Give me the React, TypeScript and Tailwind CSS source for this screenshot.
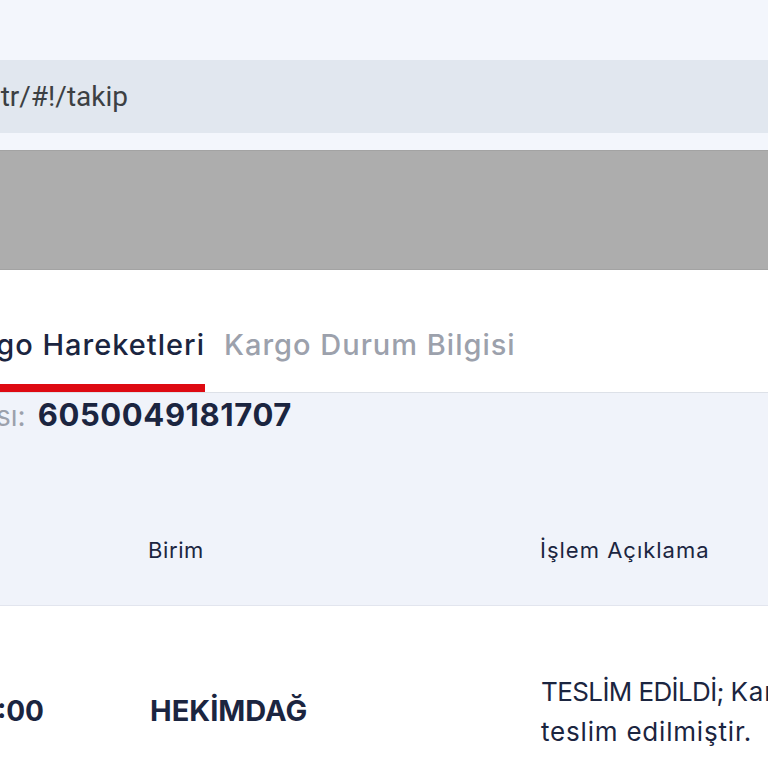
export default function App() {
  return (
    <div className="relative flex h-[768px] w-[768px] flex-col overflow-hidden bg-white font-['Inter','Noto_Sans',sans-serif] text-[#1b2540]">
      {/* browser chrome */}
      <div className="h-[60px] shrink-0 bg-[#f3f6fc]" />
      <div className="flex h-[73px] shrink-0 items-center bg-[#e1e7ef]">
        <div className="flex w-[128px] shrink-0 justify-end">
          <span className="whitespace-nowrap font-['Roboto',sans-serif] text-[28px] text-[#3c4043]">
            kargotakip.com.tr/#!/takip
          </span>
        </div>
      </div>
      <div className="h-[17px] shrink-0 bg-[#f3f6fc]" />
      <div className="h-[120px] shrink-0 border-y border-[#a3a3a3] bg-[#adadad]" />

      {/* tabs */}
      <div className="flex h-[123px] shrink-0 items-end border-b border-[#dde1e8] bg-white">
        <div className="flex w-[205px] shrink-0 justify-end border-b-[8px] border-[#de0a12] pb-[18px]">
          <span className="whitespace-nowrap text-[29px] font-medium tracking-[1px]">Kargo Hareketleri</span>
        </div>
        <div className="ml-[19px] pb-[26px]">
          <span className="whitespace-nowrap text-[29px] font-medium tracking-[1px] text-[#9ca1ac]">
            Kargo Durum Bilgisi
          </span>
        </div>
      </div>

      {/* tracking number + table header */}
      <div className="flex shrink-0 flex-col bg-[#f0f3fa]">
        <div className="flex h-[44px] items-center">
          <div className="flex w-[292px] shrink-0 items-baseline justify-end gap-3 whitespace-nowrap">
            <span className="text-[28px] text-[#9ca1ac]">Takip Numarası:</span>
            <span className="text-[31px] font-bold tracking-[0.6px]">6050049181707</span>
          </div>
        </div>
        <div className="grid h-[169px] grid-cols-[148px_392px_1fr] items-start border-b border-[#e2e5ee] pt-[98px] text-[22px] leading-[30px] tracking-[0.6px]">
          <div />
          <div>Birim</div>
          <div className="whitespace-nowrap tracking-[1px]">İşlem Açıklama</div>
        </div>
      </div>

      {/* row */}
      <div className="grid h-[200px] shrink-0 grid-cols-[150px_391px_1fr] items-start">
        <div className="flex w-[44px] justify-end pt-[85px]">
          <span className="whitespace-nowrap text-[28px] font-bold leading-[40px]">12.05.2023 14:00</span>
        </div>
        <div className="whitespace-nowrap pt-[85px] text-[29px] font-bold leading-[40px]">HEKİMDAĞ</div>
        <div className="whitespace-nowrap pt-[66px] text-[26px] leading-[40px] tracking-[0.8px]">
          <div>
            <span className="tracking-[-0.6px]">TESLİM EDİLDİ; </span>Kargo alıcısına
          </div>
          <div>teslim edilmiştir.</div>
        </div>
      </div>
    </div>
  );
}
